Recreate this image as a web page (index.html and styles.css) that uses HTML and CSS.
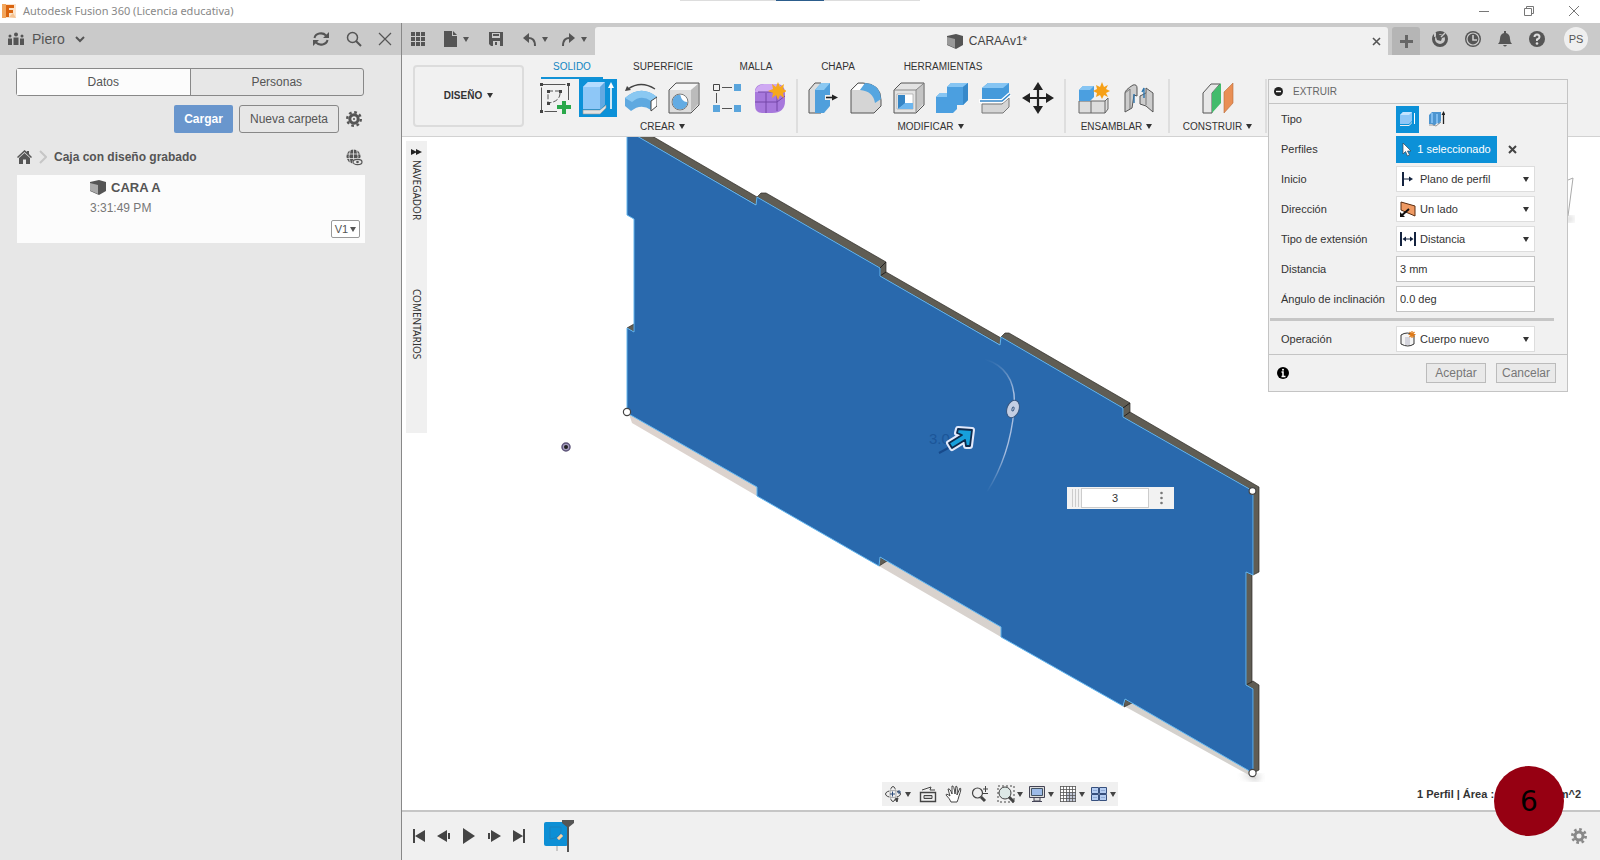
FILE: index.html
```html
<!DOCTYPE html>
<html lang="es">
<head>
<meta charset="utf-8">
<title>Autodesk Fusion 360</title>
<link rel="stylesheet" href="styles.css">
</head>
<body>
<header class="titlebar">
  <svg class="logo" width="14" height="14" viewBox="0 0 14 14"><path d="M0 0h14v14H0z" fill="#fbe3cb"/><path d="M0 0h4v14H0z" fill="#f3a65c"/><path d="M4 1h8v3H7v2h4v3H7v4H4z" fill="#d9640f"/><path d="M7 13l4-4 3 5z" fill="#f6c391"/></svg>
  <span class="title">Autodesk Fusion 360 (Licencia educativa)</span>
  <span class="top-strip"></span>
  <div class="win-controls">
    <button aria-label="Minimizar"><svg width="12" height="12"><path d="M1 6.500h10" class="thin"/></svg></button>
    <button aria-label="Restaurar"><svg width="12" height="12"><path d="M1.500 3.500h7v7h-7zM3.500 3.500v-2h7v7h-2" class="thin"/></svg></button>
    <button aria-label="Cerrar"><svg width="12" height="12"><path d="M1 1l10 10M11 1L1 11" class="thin"/></svg></button>
  </div>
</header>

<main class="app">
  <aside class="data-panel">
    <div class="panel-head">
      <svg width="18" height="14" fill="#555"><circle cx="9" cy="2.500" r="2"/><circle cx="3" cy="4" r="1.500"/><circle cx="15" cy="4" r="1.500"/><path d="M6.500 5.500h5V13h-5zM1 6.500h4V13H1zM13 6.500h4V13h-4z"/></svg>
      <span class="team">Piero</span>
      <svg width="10" height="7"><path d="M1 1l4 4 4-4" fill="none" stroke="#555" stroke-width="2"/></svg>
      <span class="grow"></span>
      <div class="head-actions">
        <button aria-label="Actualizar"><svg width="18" height="16" fill="none" stroke="#555" stroke-width="2"><path d="M2.500 7A6.500 5.500 0 0 1 14 4.500M15.500 9A6.500 5.500 0 0 1 4 11.500"/><path d="M17 1v6h-6zM1 15V9h6z" fill="#555" stroke="none"/></svg></button>
        <button aria-label="Buscar"><svg width="16" height="16" fill="none" stroke="#555"><circle cx="6.500" cy="6.500" r="5" stroke-width="1.500"/><path d="M10 10l5 5" stroke-width="2"/></svg></button>
        <button aria-label="Cerrar panel"><svg width="14" height="14"><path d="M1 1l12 12M13 1L1 13" stroke="#555" stroke-width="1.200"/></svg></button>
      </div>
    </div>
    <div class="panel-body">
      <div class="switch"><button class="on">Datos</button><button>Personas</button></div>
      <div class="panel-actions">
        <button class="primary">Cargar</button>
        <button class="outline">Nueva carpeta</button>
        <button class="plain" aria-label="Ajustes"><svg width="16" height="16" viewBox="0 0 16 16"><circle cx="8" cy="8" r="4.200" fill="none" stroke="#555" stroke-width="3"/><circle cx="8" cy="8" r="6.800" fill="none" stroke="#555" stroke-width="2.400" stroke-dasharray="2.700 2.640"/><circle cx="8" cy="8" r="1" fill="#555"/></svg></button>
      </div>
      <div class="crumbs">
        <svg width="15" height="14" fill="#555"><path d="M7.500 0L0 7l1 1 6.500-6L14 8l1-1-3-3V1h-2v1z"/><path d="M2 8l5.500-5L13 8v6H9V9.500H6V14H2z"/></svg>
        <svg width="8" height="14"><path d="M1 1l6 6-6 6" fill="none" stroke="#c6c6c6" stroke-width="2"/></svg>
        <strong>Caja con diseño grabado</strong>
        <span class="grow"></span>
        <svg width="17" height="17" viewBox="0 0 17 17"><circle cx="7.500" cy="7.500" r="7" fill="#555"/><path d="M0 5h15M0 9.500h15M7.500 0v15M4.500 0q-3 7.500 0 15M10.500 0q3 7.500 0 15" stroke="#e7e7e7" stroke-width=".8" fill="none"/><ellipse cx="11.500" cy="13" rx="5.500" ry="3.600" fill="#e7e7e7"/><ellipse cx="11.500" cy="13" rx="4.500" ry="2.600" fill="none" stroke="#555" stroke-width="1.200"/><circle cx="11.500" cy="13" r="1.300" fill="#555"/></svg>
      </div>
      <article class="file-card">
        <div class="file-name"><svg width="16" height="15"><path d="M0 2l9-2 7 2v9l-7 4-9-4z" fill="#555"/><path d="M0 3l8 2v9l-8-3.500z" fill="#aaa"/></svg><strong>CARA A</strong></div>
        <div class="file-time">3:31:49 PM</div>
        <button class="version">V1<i class="caret"></i></button>
      </article>
    </div>
  </aside>

  <section class="workspace">
    <nav class="docbar">
      <div class="quick">
        <button aria-label="Panel de datos"><svg width="14" height="14" fill="#555"><path d="M0 0h4v4H0zM5 0h4v4H5zM10 0h4v4h-4zM0 5h4v4H0zM5 5h4v4H5zM10 5h4v4h-4zM0 10h4v4H0zM5 10h4v4H5zM10 10h4v4h-4z"/></svg></button>
        <button class="q-file" aria-label="Archivo"><svg width="13" height="16" fill="#555"><path d="M0 0h8v5h5v11H0zM9 0l4 4H9z"/></svg><i class="caret"></i></button>
        <button class="q-save" aria-label="Guardar"><svg width="14" height="14"><path d="M0 0h14v14H2l-2-2z" fill="#555"/><path d="M3 1h8v5H3zM4 9h7v5H4z" fill="#ccc"/><path d="M4 3h6M7 10v3" stroke="#555" stroke-width="2"/></svg></button>
        <button class="q-undo" aria-label="Deshacer"><svg width="13" height="13"><path d="M0 5l6-5v10z" fill="#555"/><path d="M4 5q8-1 8 8" fill="none" stroke="#555" stroke-width="2"/></svg><i class="caret"></i></button>
        <button class="q-redo" aria-label="Rehacer"><svg width="13" height="13"><path d="M13 5L7 0v10z" fill="#555"/><path d="M9 5q-8-1-8 8" fill="none" stroke="#555" stroke-width="2"/></svg><i class="caret"></i></button>
      </div>
      <div class="doc-tab">
        <span class="doc-name"><svg width="16" height="15"><path d="M0 2l9-2 7 2v9l-7 4-9-4z" fill="#555"/><path d="M0 3l8 2v9l-8-3.500z" fill="#999"/></svg>CARAAv1*</span>
        <button aria-label="Cerrar documento"><svg width="9" height="9"><path d="M1 1l7 7M8 1L1 8" stroke="#555" stroke-width="1.600"/></svg></button>
      </div>
      <button class="new-tab" aria-label="Nueva pestaña"><svg width="13" height="13"><path d="M6.500 0v13M0 6.500h13" stroke="#666" stroke-width="3"/></svg></button>
      <div class="account">
        <button aria-label="Extensiones"><svg width="16" height="16"><circle cx="8" cy="8" r="6.500" fill="none" stroke="#555" stroke-width="3"/><path d="M2 0l5 5-5 1z" fill="#cacaca"/><path d="M4 1l4 3 4-1 1 3-3 1-1 3-4-1-1-3z" fill="#555"/><path d="M9 6l4-4" stroke="#cacaca" stroke-width="1.500"/></svg></button>
        <button aria-label="Estado"><svg width="16" height="16"><circle cx="8" cy="8" r="8" fill="#555"/><circle cx="8" cy="8" r="6" fill="none" stroke="#ccc" stroke-width="1.200"/><path d="M8 4v5h4" fill="none" stroke="#ccc" stroke-width="1.600"/></svg></button>
        <button aria-label="Notificaciones"><svg width="14" height="16" fill="#555"><path d="M6 0h2v2q4 1 4 6 0 3 2 5H0q2-2 2-5 0-5 4-6zM5 14h4q-2 3-4 0z"/></svg></button>
        <button aria-label="Ayuda"><svg width="16" height="16"><circle cx="8" cy="8" r="8" fill="#555"/><path d="M5.500 6q0-2.500 2.500-2.500T10.500 6Q10.500 7.500 8 8.500V10" fill="none" stroke="#ddd" stroke-width="2"/><circle cx="8" cy="12.500" r="1.300" fill="#ddd"/></svg></button>
        <button class="avatar">PS</button>
      </div>
    </nav>

    <div class="ribbon">
      <button class="mode">DISEÑO<i class="caret"></i></button>
      <div class="ribbon-main">
        <div class="ribbon-tabs">
          <button class="active">SOLIDO</button><button>SUPERFICIE</button><button>MALLA</button><button>CHAPA</button><button>HERRAMIENTAS</button>
        </div>
        <div class="groups">
          <div class="group create">
            <div class="tools">
              <button aria-label="Crear boceto"><svg width="32" height="32"><g fill="none" stroke="#555"><path d="M2.500 2.500h27v27h-27z" stroke-dasharray="24 3"/><path d="M9 9h12v3q-1 8-12 9z" stroke-dasharray="5 2"/></g><path d="M1 1h3v3H1zM28 1h3v3h-3zM1 28h3v3H1zM8 8h3v3H8zM20 8h3v3h-3zM8 20h3v3H8z" fill="#444"/><path d="M18 18h14v14H18z" fill="#f1f1f1"/><path d="M23 19h4v4h5v4h-5v5h-4v-5h-5v-4h5z" fill="#2aa84a"/></svg></button>
              <button class="selected" aria-label="Extruir"><svg width="38" height="38"><path d="M4 8l5-5h17v22l-5 5H4z" fill="#8ec7f7"/><path d="M4 8l5-5h17l-5 5z" fill="#b5dcff"/><path d="M21 8l5-5v22l-5 5z" fill="#62a9e2"/><path d="M4 31h17l6-5v3l-6 6H4z" fill="#e2e2e2" stroke="#999" stroke-width=".6"/><path d="M32 30V7" stroke="#fff" stroke-width="1.600"/><path d="M32 3l3 6h-6z" fill="#fff"/></svg></button>
              <button aria-label="Revolución"><svg width="32" height="32"><path d="M0 16q16-14 32-1l-6 5v8q-10-7-20 1l-6-5z" fill="#5fa9e0"/><path d="M0 16q16-14 32-1l-6 4q-10-7-19 1z" fill="#8ac8f2"/><path d="M26 19l6-4v9l-6 5z" fill="#fff" stroke="#444"/><path d="M3 7Q16-2 30 7" fill="none" stroke="#444" stroke-width="1.300"/><path d="M0 9l2-5 4 4z" fill="#444"/></svg></button>
              <button aria-label="Agujero"><svg width="32" height="32"><path d="M1 8l7-7h23v22l-8 8H1z" fill="#ddd" stroke="#555"/><path d="M2 8l6-6h22l-7 6z" fill="#f6f6f6"/><path d="M23 8l7-6v20l-7 8z" fill="#bbb"/><circle cx="12" cy="20" r="8" fill="#62abe3" stroke="#fff"/><path d="M12 12a8 8 0 0 1 8 8q-6 1-8-8z" fill="#fff"/><circle cx="12" cy="20" r="8" fill="none" stroke="#777"/></svg></button>
              <button aria-label="Patrón"><svg width="30" height="30"><path d="M10 4.500h10M10 25.500h10M4.500 10v10" fill="none" stroke="#555"/><path d="M1.500 1.500h6v6h-6z" fill="#f1f1f1" stroke="#444"/><path d="M22 1h7v7h-7zM1 22h7v7H1zM22 22h7v7h-7z" fill="#5aa5dc"/></svg></button>
              <button aria-label="Crear forma"><svg width="32" height="32"><path d="M1 10Q1 2 10 2h12q9 0 9 9v8q0 12-13 12H8q-7 0-7-8z" fill="#a778dc"/><path d="M1 10Q2 3 10 2h12q4 0 5 3-3 5-10 5H3z" fill="#cfa9f3"/><path d="M23 11v18M12 11v20M1 20h22l8-6M4 10h18q4 0 6-4" fill="none" stroke="#7447a8"/><path d="M24 0l2 5 4-3-1 5 4 2-4 2 1 5-4-3-2 5-2-5-4 3 1-5-5-2 5-2-1-5 4 3z" fill="#f6a81c"/></svg></button>
            </div>
            <button class="group-label">CREAR<i class="caret"></i></button>
          </div>
          <div class="group modify">
            <div class="tools">
              <button aria-label="Pulsar/Tirar"><svg width="32" height="32"><path d="M2 8l6-7h6v30H2z" fill="#ddd" stroke="#555"/><path d="M8 8l6-7h9v23l-6 7H8z" fill="#4f9fdc"/><path d="M8 8l6-7h9l-6 7z" fill="#8ac8f2"/><path d="M18 13h8v5h-8z" fill="#f1f1f1"/><path d="M19 15.500h8" stroke="#222" stroke-width="1.600"/><path d="M31 15.500l-6-3v6z" fill="#222"/></svg></button>
              <button aria-label="Empalme"><svg width="32" height="32"><path d="M1 8l7-7h5q18 1 18 17v6l-7 7H1z" fill="#d5d5d5" stroke="#555"/><path d="M2 8l6-6h7l-5 6z" fill="#fff"/><path d="M10 8l5-7q15 1 16 16l-6 4Q23 9 10 8z" fill="#56a6e0"/></svg></button>
              <button aria-label="Vaciado"><svg width="32" height="32"><path d="M1 8l7-7h23v22l-8 8H1z" fill="#e3e3e3" stroke="#555"/><path d="M23 8l7-6v20l-7 8z" fill="#c4c4c4"/><path d="M23 8v22M1 8h22l7-6" fill="none" stroke="#888"/><path d="M4 12h16v15H4z" fill="#fff" stroke="#999" stroke-width=".6"/><path d="M5 13h7v9l-7 5z" fill="#3585c5"/><path d="M5 27l7-6h8v6z" fill="#6db6ee"/></svg></button>
              <button aria-label="Combinar"><svg width="32" height="32"><path d="M0 15l4-4h7V5l4-4h17v17l-5 5h-6v4l-4 4H0z" fill="#4b9fe0"/><path d="M11 5l4-4h17l-5 4zM0 15l4-4h7v4z" fill="#86c5f3"/><path d="M27 5l5-4v17l-5 5z" fill="#3789ca"/></svg></button>
              <button aria-label="Dividir cuerpo"><svg width="32" height="32"><path d="M3 6l6-5h21v12l-6 5H3z" fill="#459adb"/><path d="M3 6l6-5h21l-6 5z" fill="#86c5f3"/><path d="M3 22h20l7-6v9l-6 6H3z" fill="#d5d5d5" stroke="#777"/><path d="M0 19h23l8-7" fill="none" stroke="#fff" stroke-width="4"/><path d="M1 19h22l8-7" fill="none" stroke="#3487c9" stroke-width="1.400"/></svg></button>
              <button aria-label="Mover"><svg width="32" height="32"><path d="M16 4v24M4 16h24" stroke="#222" stroke-width="2.200"/><path d="M16 0l5 8H11zM16 32l5-8H11zM0 16l8-5v10zM32 16l-8-5v10z" fill="#222"/></svg></button>
            </div>
            <button class="group-label">MODIFICAR<i class="caret"></i></button>
          </div>
          <div class="group assemble">
            <div class="tools">
              <button aria-label="Nuevo componente"><svg width="32" height="32"><path d="M1 19h26v12H1zM27 19l3-3v11l-3 4M13 19v12" fill="#ddd" stroke="#666"/><path d="M1 8l4-4h11v11l-4 4H1z" fill="#4b9fe0"/><path d="M1 8l4-4h11l-4 4z" fill="#86c5f3"/><path d="M24 0l2 5 4-2-2 4 4 2-4 2 2 4-4-2-2 4-2-4-4 2 1-4-4-2 4-2-1-4 4 2z" fill="#f6a016"/></svg></button>
              <button aria-label="Unión"><svg width="32" height="32"><path d="M2 11q0-3 8-8 4-1 4 3v8l-3-1-2 13-7 4z" fill="#ccc" stroke="#555"/><path d="M17 14l6-3V6l7 5v19l-7-6-6-2z" fill="#ccc" stroke="#555"/><path d="M2 11l5-4v20M23 11v12" fill="none" stroke="#777"/><path d="M11 21v-9M21 16V6l-2 4" fill="none" stroke="#2e75ad" stroke-width="1.400"/></svg></button>
            </div>
            <button class="group-label">ENSAMBLAR<i class="caret"></i></button>
          </div>
          <div class="group construct">
            <div class="tools">
              <button aria-label="Plano"><svg width="32" height="32"><path d="M1 11l8-9h9l-8 9v20H1z" fill="#e8e8e8" stroke="#555"/><path d="M10 11l9-10v20l-9 10z" fill="#43bb6c"/><path d="M22 10l9-9v20l-9 10z" fill="#e98f55" stroke="#b96b39" stroke-width=".6"/></svg></button>
            </div>
            <button class="group-label">CONSTRUIR<i class="caret"></i></button>
          </div>
        </div>
      </div>
    </div>

    <div class="canvas">
      <svg class="model" viewBox="402 137 1198 673" preserveAspectRatio="xMinYMin slice">
        <defs>
          <linearGradient id="under" x1="0" y1="0" x2="1" y2="1"><stop offset="0" stop-color="#ddd3ce"/><stop offset="1" stop-color="#d3d1cd"/></linearGradient>
          <linearGradient id="fade" x1="0" y1="0" x2="0" y2="1"><stop offset="0" stop-color="#9db4d5" stop-opacity="0"/><stop offset=".25" stop-color="#a9bfe0"/><stop offset=".7" stop-color="#a9bfe0"/><stop offset="1" stop-color="#9db4d5" stop-opacity="0"/></linearGradient>
          <filter id="soft"><feGaussianBlur stdDeviation="3"/></filter>
        </defs>
        <path d="M1240 774l22 2-6 5z" fill="#999" filter="url(#soft)" opacity=".6"/>
        <path d="M629 414L757 487V496L632 423zM880 557L1001 627V637L879 566zM1125 699L1253 773 1256 779 1124 706z" fill="url(#under)"/>
        <g fill="#605d54" stroke="#2e2d28" stroke-width=".7">
          <path d="M637 136H652L757 197V205z"/>
          <path d="M757 197L761 193H766L886 262V272L1001 338V345L880 276V268z"/>
          <path d="M1001 337L1005 333H1009L1130 403V412L1259 487V572L1253 575V491L1123 417V408z"/>
          <path d="M1246 572L1252 575V682L1246 685zM1246 685L1253 681 1259 685V770L1253 773V689z"/>
          <path d="M627 328L634 324V332zM879 557L887 561 879 566zM1124 699L1132 703 1124 707z"/>
        </g>
        <path d="M1123 408L1130 403M1123 417L1130 412M880 268L886 262M880 276L886 272" stroke="#222"/>
        <path d="M627 136H637L756 205 757 197 880 268V276L1000 345 1001 337 1123 408V417L1253 491V575L1246 572V685L1253 689V773L1125 699 1123 706 1001 637V627L880 557 879 566 757 496V487L627 413V328L634 332V219L627 215z" fill="#2969ad" stroke="#62b5ee"/>
        <text x="929" y="444" class="dim">3.0</text>
        <path d="M939 453L952 446" stroke="#174a8b" stroke-width="2"/>
        <path d="M985 359Q1018 370 1014 410 1010 455 987 492" fill="none" stroke="url(#fade)" stroke-width="1.400"/>
        <ellipse cx="1013" cy="409" rx="6" ry="9" transform="rotate(20 1013 409)" fill="#c3cee3" stroke="#34557f"/>
        <ellipse cx="1013" cy="409" rx="1" ry="2" transform="rotate(20 1013 409)" fill="none" stroke="#34557f"/>
        <g stroke-linejoin="round">
          <path d="M949 443L962 435 957 433 958 429 972 430 970 446 966 446 965 440 952 448z" fill="#e2e9fb" stroke="#e2e9fb" stroke-width="6"/>
          <path d="M949 443L962 435 957 433 958 429 972 430 970 446 966 446 965 440 952 448z" fill="#17a0dc" stroke="#0d2a4d" stroke-width="1.800"/>
        </g>
        <g fill="#fff" stroke="#444" stroke-width="1.200"><circle cx="627" cy="412" r="3.600"/><circle cx="1252.500" cy="491" r="3.400"/><circle cx="1252.500" cy="773" r="3.600"/></g>
        <circle cx="566" cy="447" r="4" fill="#a79fc0" stroke="#5d5478" stroke-width="1.500"/><circle cx="566" cy="447" r="2" fill="#222"/>
        <path d="M1568 180l5-2-5 38" fill="none" stroke="#aaa"/>
        <ellipse cx="1569" cy="219" rx="5" ry="3" fill="#ccc" filter="url(#soft)"/>
      </svg>

      <div class="side-tabs">
        <svg width="11" height="8"><path d="M0 1l6 3-6 3zM5 1l6 3-6 3z" fill="#222"/></svg>
        <button>NAVEGADOR</button><button>COMENTARIOS</button>
      </div>

      <div class="value-box">
        <span class="grip"></span><input aria-label="Valor de distancia" value="3"><button aria-label="Más opciones"><svg width="3" height="15" fill="#777"><circle cx="1.500" cy="2" r="1.300"/><circle cx="1.500" cy="7" r="1.300"/><circle cx="1.500" cy="12" r="1.300"/></svg></button>
      </div>

      <div class="view-nav">
        <button aria-label="Órbita"><svg width="18" height="18" fill="none" stroke="#444"><ellipse cx="8" cy="9" rx="7.500" ry="3.500"/><ellipse cx="8" cy="9" rx="3" ry="7.500"/><path d="M4 4h8v10H4z" fill="#f0f0f0" stroke="none" opacity=".6"/><path d="M5 9h5M7.500 6.500v5M14 5v4M12 7h4" stroke="#2b4a78"/><path d="M10 14l3-1-1 4z" fill="#444"/></svg><i class="caret"></i></button>
        <button aria-label="Mirar a"><svg width="18" height="18" fill="none" stroke="#444"><path d="M1.500 7.500h15v9h-15z" stroke-width="1.400"/><path d="M5 10.500h8v3H5z" fill="#ccc"/><path d="M3 5l9-3-1 3h5" /></svg></button>
        <button aria-label="Encuadre"><svg width="18" height="18"><path d="M6 17q-1-3-5-7 0-2 4 1L3 4q2-1 4 5L7 1q2-1 3 8l1-8q2 0 1 9l3-7q2 0-1 8-1 4-2 6z" fill="#fff" stroke="#444"/></svg></button>
        <button aria-label="Zoom"><svg width="18" height="18" fill="none" stroke="#444"><circle cx="6.500" cy="8" r="5" stroke-width="1.200"/><path d="M10 12l4 4" stroke-width="3"/><path d="M12 4h5M14.500 1v6M12 8.500h5"/></svg></button>
        <button aria-label="Ajustar"><svg width="18" height="18" fill="none" stroke="#444"><path d="M1 1h16v16H1z" stroke-dasharray="2 2"/><circle cx="8" cy="8" r="6" fill="#dde8e6"/><path d="M12 12l5 5" stroke-width="3"/></svg><i class="caret"></i></button>
        <button aria-label="Visualización"><svg width="18" height="18"><path d="M1.500 1.500h15v11h-15zM6 13v3h6v-3M4 16.500h10" fill="#ddd" stroke="#445"/><path d="M3.500 3.500h11v7h-11z" fill="#9dbbe8" stroke="#456"/></svg><i class="caret"></i></button>
        <button aria-label="Rejilla"><svg width="18" height="18"><path d="M1.500 1.500h15v15h-15z" fill="#fff"/><path d="M7 7h10v10H7z" fill="#c3c9d8"/><path d="M1.500 1v16M4.500 1v16M7.500 1v16M10.500 1v16M13.500 1v16M16.500 1v16M1 1.500h16M1 4.500h16M1 7.500h16M1 10.500h16M1 13.500h16M1 16.500h16" stroke="#555" stroke-width=".8"/></svg><i class="caret"></i></button>
        <button aria-label="Vistas"><svg width="18" height="18"><path d="M1.500 2.500h7v6h-7zM9.500 2.500h7v6h-7zM1.500 9.500h7v6h-7zM9.500 9.500h7v6h-7z" fill="#b5cdf2" stroke="#37507e"/><path d="M3 5.500h4M11 5.500h4M3 12.500h4M11 12.500h4" stroke="#8fabd6"/></svg><i class="caret"></i></button>
      </div>
      <div class="status"><span>1 Perfil | Área :</span><span>mm^2</span></div>
    </div>

    <footer class="timeline">
      <div class="playback">
        <button aria-label="Inicio"><svg width="14" height="14" fill="#444"><path d="M1 0h2v14H1zM13 1v12L3 7z"/></svg></button>
        <button aria-label="Atrás"><svg width="14" height="14" fill="#444"><path d="M10 1v12L0 7zM11 4h2v6h-2z"/></svg></button>
        <button aria-label="Reproducir"><svg width="14" height="16" fill="#444"><path d="M1 0l12 8-12 8z"/></svg></button>
        <button aria-label="Adelante"><svg width="14" height="14" fill="#444"><path d="M4 1v12l10-6zM1 4h2v6H1z"/></svg></button>
        <button aria-label="Final"><svg width="14" height="14" fill="#444"><path d="M11 0h2v14h-2zM1 1v12l10-6z"/></svg></button>
      </div>
      <button class="feature" aria-label="Boceto1"><svg width="32" height="34"><path d="M13 25v7" stroke="#bbb" stroke-width="1.500"/><rect y="3" width="24" height="24" rx="2" fill="#0d8fd5"/><path d="M6 8h11v4q-1 7-11 8z" fill="none" stroke="#1a81bd"/><path d="M13 19l4-4 2 2-4 4z" fill="#f5d9a0" stroke="#caa" stroke-width=".6"/><path d="M18 1h12v3l-5 4h-2l-5-4z" fill="#555"/><path d="M24 7v26" stroke="#555" stroke-width="2"/></svg></button>
      <span class="grow"></span>
      <button aria-label="Ajustes de línea de tiempo"><svg width="16" height="16"><circle cx="8" cy="8" r="4" fill="none" stroke="#888" stroke-width="3"/><circle cx="8" cy="8" r="6.600" fill="none" stroke="#888" stroke-width="2.800" stroke-dasharray="2.600 2.580"/></svg></button>
    </footer>

    <form class="dialog">
      <div class="dialog-head"><svg width="9" height="9"><circle cx="4.500" cy="4.500" r="4.500" fill="#222"/><path d="M2 4.500h5" stroke="#fff" stroke-width="1.400"/></svg>EXTRUIR</div>
      <div class="row"><span class="label">Tipo</span>
        <button type="button" class="type on" aria-label="Extrusión"><svg width="17" height="18"><path d="M1 5l3-3h9v9l-3 3H1z" fill="#8ec7f7"/><path d="M1 5l3-3h9l-3 3z" fill="#c4e4ff"/><path d="M1 15h9l3-3v1l-3 3H1z" fill="#eee"/><path d="M15.500 3v11" stroke="#fff"/></svg></button>
        <button type="button" class="type" aria-label="Extrusión fina"><svg width="17" height="18"><path d="M1 5l3-3h9v9l-2 3-2-1-3 3-2-2H1z" fill="#4d95d0"/><path d="M4 3v10M9 4v9" stroke="#8ec7f7" stroke-width="1.500"/><path d="M1 15h4l3 1 5-4" fill="none" stroke="#999"/><path d="M15.500 4v10" stroke="#222" stroke-width="1.300"/><path d="M15.500 1l2 4h-4z" fill="#222"/></svg></button>
      </div>
      <div class="row"><span class="label">Perfiles</span>
        <button type="button" class="picked"><svg width="9" height="15"><path d="M1 1v11l2.500-2.500L5.500 14l2-1-2-4H9z" fill="#fff" stroke="#345" stroke-width=".7"/></svg>1 seleccionado</button>
        <button type="button" class="clear" aria-label="Borrar selección"><svg width="9" height="9"><path d="M1 1l7 7M8 1L1 8" stroke="#444" stroke-width="2"/></svg></button>
      </div>
      <div class="row"><label class="label" for="start">Inicio</label>
        <div class="combo"><svg width="16" height="16"><path d="M3 1v14" stroke="#14233f" stroke-width="2"/><path d="M4 8h7" stroke="#14233f"/><path d="M13 8L9 5.500v5z" fill="#14233f"/></svg><select id="start"><option>Plano de perfil</option></select></div></div>
      <div class="row"><label class="label" for="dir">Dirección</label>
        <div class="combo"><svg width="16" height="16"><path d="M1 1l14 4v10L1 9z" fill="#ef9a63" stroke="#5a2c10"/><path d="M1 15L9 8" stroke="#111" stroke-width="2"/><path d="M0 16v-5l5 5z" fill="#111"/></svg><select id="dir"><option>Un lado</option></select></div></div>
      <div class="row"><label class="label" for="ext">Tipo de extensión</label>
        <div class="combo"><svg width="16" height="16"><path d="M1 1v14M15 1v14" stroke="#14233f" stroke-width="2"/><path d="M4 8h8" stroke="#14233f"/><path d="M2.500 8L6 5.500v5zM13.500 8L10 5.500v5z" fill="#14233f"/></svg><select id="ext"><option>Distancia</option></select></div></div>
      <div class="row"><label class="label" for="dist">Distancia</label><input id="dist" class="field" value="3 mm"></div>
      <div class="row"><label class="label" for="taper">Ángulo de inclinación</label><input id="taper" class="field" value="0.0 deg"></div>
      <div class="rule"></div>
      <div class="row"><label class="label" for="op">Operación</label>
        <div class="combo"><svg width="16" height="16"><path d="M1 4q6-4 13 0v9q-6 4-13 0z" fill="#f4f4f4" stroke="#333"/><path d="M5 6h5v8H5z" fill="#d5d5dd"/><path d="M12 0v7M8.500 3.500h7M9.500 1l5 5M14.500 1l-5 5" stroke="#e07b18" stroke-width="1.200"/></svg><select id="op"><option>Cuerpo nuevo</option></select></div></div>
      <div class="dialog-foot">
        <svg width="12" height="12"><circle cx="6" cy="6" r="6" fill="#000"/><path d="M4.500 5H6v4M4.500 9.500h4" stroke="#fff" stroke-width="1.500" fill="none"/><circle cx="6" cy="2.800" r="1" fill="#fff"/></svg>
        <span class="grow"></span>
        <button type="button">Aceptar</button><button type="button">Cancelar</button>
      </div>
    </form>
    <div class="step">6</div>
  </section>
</main>
</body>
</html>
```
FILE: styles.css
```css
* { box-sizing: border-box; }
body { margin: 0; height: 100vh; display: flex; flex-direction: column; overflow: hidden; background: #fff; color: #444; font: 12px "Liberation Sans", Arial, sans-serif; }
button { font: inherit; color: inherit; background: none; border: 0; padding: 0; margin: 0; display: flex; align-items: center; justify-content: center; }
svg { display: block; flex: none; }
.grow { flex: 1; }
.caret { width: 0; height: 0; border: 3px solid transparent; border-top: 5px solid currentColor; border-bottom: 0; }
.thin { fill: none; stroke: #777; }

.titlebar { position: relative; height: 23px; flex: none; display: flex; align-items: center; gap: 7px; padding: 0 20px 2px 2px; color: #888; }
.title { font: 11px "Noto Sans", sans-serif; }
.top-strip { position: absolute; top: 0; left: 50%; width: 240px; height: 1px; margin-left: -120px; background: linear-gradient(to right, #ddd 40%, #2c5d8c 40%, #2c5d8c 60%, #ddd 60%); }
.win-controls { margin-left: auto; display: flex; gap: 33px; }

.app { flex: 1; min-height: 0; display: flex; }
.data-panel { width: 402px; flex: none; background: #e7e7e7; border-right: 1px solid #888; color: #555; }
.panel-head { height: 32px; background: #cacaca; display: flex; align-items: center; padding: 0 9px 0 7px; }
.team { font-size: 14px; margin: 0 10px 0 7px; }
.head-actions { display: flex; gap: 16px; }
.panel-body { padding: 13px 35px 0 16px; }
.switch { display: flex; height: 28px; border: 1px solid #888; border-radius: 3px; width: 348px; }
.switch button { flex: 1; }
.switch .on { background: #fcfcfc; border-right: 1px solid #888; }
.panel-actions { display: flex; justify-content: flex-end; gap: 6px; margin-top: 9px; padding-right: 3px; }
.primary { width: 59px; height: 28px; background: #6996cd; border-radius: 2px; color: #fff; font-weight: bold; }
.outline { width: 100px; height: 28px; border: 1px solid #888; border-radius: 3px; }
.plain { width: 18px; height: 28px; }
.crumbs { display: flex; align-items: center; gap: 7px; height: 20px; margin: 14px 0 8px; padding: 0 3px 0 1px; }
.file-card { position: relative; height: 68px; margin-left: 1px; width: 348px; background: #fcfcfc; padding: 4px 0 0 73px; }
.file-name { display: flex; align-items: center; gap: 5px; height: 17px; font-size: 13px; }
.file-time { margin-top: 5px; color: #777; }
.version { position: absolute; right: 5px; bottom: 5px; width: 29px; height: 18px; border: 1px solid #999; border-radius: 2px; font-size: 11px; gap: 2px; background: #fff; }

.workspace { position: relative; flex: 1; min-width: 0; display: flex; flex-direction: column; }
.docbar { height: 32px; flex: none; display: flex; align-items: stretch; background: #cacaca; color: #555; }
.quick { display: flex; align-items: center; width: 193px; padding-left: 9px; }
.quick button { gap: 6px; }
.q-file { margin-left: 19px; }
.q-save { margin-left: 20px; }
.q-undo { margin-left: 20px; }
.q-redo { margin-left: 14px; }
.doc-tab { flex: 1; margin-top: 4px; padding: 0 7px; display: flex; align-items: center; background: #f1f1f1; border-radius: 3px 3px 0 0; }
.doc-name { flex: 1; display: flex; align-items: center; justify-content: center; gap: 6px; color: #444; }
.new-tab { width: 28px; margin: 4px 0 0 4px; background: #b5b5b5; border-radius: 3px 3px 0 0; }
.account { display: flex; align-items: center; gap: 17px; padding: 0 12px; }
.account .avatar { margin-left: 2px; }
.avatar { width: 24px; height: 24px; border-radius: 50%; background: #efefef; font-size: 11px; }

.ribbon { height: 82px; flex: none; display: flex; background: #f1f1f1; border-bottom: 1px solid #d2d2d2; color: #333; font-size: 10px; }
.mode { width: 111px; height: 62px; margin: 10px 0 0 11px; border: 2px solid #dcdcdc; border-radius: 4px; font-weight: bold; gap: 5px; padding-bottom: 2px; }
.ribbon-main { margin-left: 12px; }
.ribbon-tabs { display: flex; height: 24px; padding-left: 5px; }
.ribbon-tabs button { padding-bottom: 2px; margin-right: 30px; }
.ribbon-tabs button:nth-child(2) { width: 60px; }
.ribbon-tabs button:nth-child(3) { width: 66px; }
.ribbon-tabs button:nth-child(4) { width: 38px; }
.ribbon-tabs button:nth-child(5) { width: 112px; }
.ribbon-tabs .active { width: 62px; padding: 0; border-bottom: 2px solid #1292d6; color: #1085c2; }
.groups { display: flex; }
.group { border-right: 2px solid #dedede; height: 54px; }
.tools { display: flex; gap: 5px; height: 38px; }
.tools button { width: 38px; height: 38px; }
.tools .selected { background: #0c91d8; }
.group-label { width: 100%; gap: 4px; height: 18px; }
.create { padding-right: 7px; }
.modify { padding: 0 7px 0 6px; }
.assemble { padding: 0 10px 0 9px; }
.assemble .tools { gap: 7px; }
.construct { width: 97px; }
.construct .tools { justify-content: center; }

.canvas { position: relative; flex: 1; min-height: 0; overflow: hidden; }
.model { width: 100%; height: 100%; }
.dim { font: 15px "Liberation Sans", sans-serif; fill: #1c5699; }
.side-tabs { position: absolute; left: 4px; top: 4px; width: 21px; height: 292px; padding-top: 7px; background: #f0f0f0; display: flex; flex-direction: column; align-items: center; }
.side-tabs button { writing-mode: vertical-rl; font: 10px "Noto Sans", sans-serif; color: #333; margin-top: 4px; }
.side-tabs button + button { margin-top: 69px; }
.value-box { position: absolute; left: 665px; top: 350px; width: 107px; height: 22px; background: #f2f2f2; display: flex; align-items: center; }
.grip { width: 8px; height: 18px; margin: 0 1px 0 5px; background: repeating-linear-gradient(to right, #ccc 0 1px, #f2f2f2 1px 3px); }
.value-box input { width: 68px; height: 20px; border: 1px solid #ccc; padding: 0; text-align: center; font: 11px "Liberation Sans", sans-serif; color: #333; }
.value-box button { flex: 1; height: 100%; }
.view-nav { position: absolute; left: 480px; bottom: 4px; height: 24px; padding: 0 5px 0 3px; background: #f0f0f0; display: flex; align-items: center; gap: 8px; }
.view-nav button { gap: 2px; }
.view-nav button:nth-child(n+5) { margin-right: -3px; }
.status { position: absolute; right: 19px; bottom: 10px; width: 164px; display: flex; justify-content: space-between; font: bold 11px "Liberation Sans", sans-serif; color: #333; }

.timeline { height: 50px; flex: none; display: flex; align-items: center; background: #f0f0f0; border-top: 2px solid #c6c6c6; padding: 0 13px 0 10px; }
.playback { display: flex; gap: 11px; }
.feature { margin-left: 18px; }

.dialog { position: absolute; right: 32px; top: 56px; width: 300px; background: #f1f1f1; border: 1px solid #c4c4c4; color: #333; font-size: 11px; }
.dialog-head { height: 24px; display: flex; align-items: center; gap: 10px; padding-left: 5px; border-bottom: 1px solid #c4c4c4; font-size: 10px; color: #666; }
.row { height: 30px; display: flex; align-items: center; padding-left: 12px; }
.label { width: 115px; flex: none; }
.type { width: 23px; height: 27px; margin-right: 6px; }
.type.on { background: #0c91d8; }
.picked { width: 101px; height: 27px; background: #0c91d8; color: #fff; gap: 6px; }
.clear { margin-left: 11px; }
.combo { width: 139px; height: 26px; display: flex; align-items: center; padding: 0 5px 0 3px; background: #fff; border: 1px solid #ddd; }
.combo::after { content: ""; border: 3px solid transparent; border-top: 5px solid #333; border-bottom: 0; }
.combo select { appearance: none; flex: 1; min-width: 0; border: 0; background: none; font: inherit; color: inherit; padding: 0 0 0 4px; }
.field { width: 139px; height: 26px; border: 1px solid #c4c4c4; background: #fff; padding: 0 3px; font: inherit; color: inherit; }
.rule { height: 3px; margin: 4px 13px 3px 1px; background: #c6c6c6; }
.dialog-foot { height: 37px; display: flex; align-items: center; gap: 10px; padding: 0 11px 0 8px; border-top: 1px solid #c4c4c4; }
.dialog-foot button { width: 60px; height: 20px; border: 1px solid #bbb; background: #e9e9e9; font-size: 12px; color: #777; }
.step { position: absolute; right: 36px; bottom: 24px; width: 70px; height: 70px; border-radius: 50%; background: #960012; color: #000; display: flex; align-items: center; justify-content: center; font: 28px "DejaVu Sans", sans-serif; }
```
